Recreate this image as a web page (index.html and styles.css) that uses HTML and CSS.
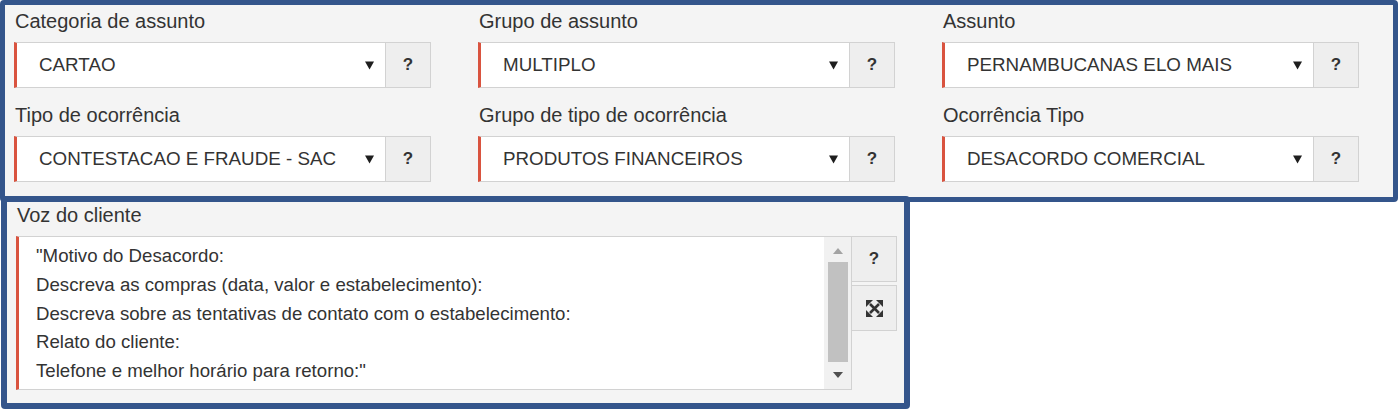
FILE: index.html
```html
<!DOCTYPE html>
<html lang="pt-BR">
<head>
<meta charset="utf-8">
<title>Ocorrência</title>
<link rel="stylesheet" href="styles.css">
</head>
<body>
<div class="panel panel-top">
  <div class="grid">
    <div class="field">
      <div class="lbl">Categoria de assunto</div>
      <div class="ctrl">
        <div class="select"><span class="val">CARTAO</span><svg class="caret" viewBox="0 0 10 9"><polygon points="0,0 10,0 5,9"/></svg></div>
        <div class="help">?</div>
      </div>
    </div>
    <div class="field">
      <div class="lbl">Grupo de assunto</div>
      <div class="ctrl">
        <div class="select"><span class="val">MULTIPLO</span><svg class="caret" viewBox="0 0 10 9"><polygon points="0,0 10,0 5,9"/></svg></div>
        <div class="help">?</div>
      </div>
    </div>
    <div class="field">
      <div class="lbl">Assunto</div>
      <div class="ctrl">
        <div class="select"><span class="val">PERNAMBUCANAS ELO MAIS</span><svg class="caret" viewBox="0 0 10 9"><polygon points="0,0 10,0 5,9"/></svg></div>
        <div class="help">?</div>
      </div>
    </div>
    <div class="field">
      <div class="lbl">Tipo de ocorrência</div>
      <div class="ctrl">
        <div class="select"><span class="val">CONTESTACAO E FRAUDE - SAC</span><svg class="caret" viewBox="0 0 10 9"><polygon points="0,0 10,0 5,9"/></svg></div>
        <div class="help">?</div>
      </div>
    </div>
    <div class="field">
      <div class="lbl">Grupo de tipo de ocorrência</div>
      <div class="ctrl">
        <div class="select"><span class="val">PRODUTOS FINANCEIROS</span><svg class="caret" viewBox="0 0 10 9"><polygon points="0,0 10,0 5,9"/></svg></div>
        <div class="help">?</div>
      </div>
    </div>
    <div class="field">
      <div class="lbl">Ocorrência Tipo</div>
      <div class="ctrl">
        <div class="select"><span class="val">DESACORDO COMERCIAL</span><svg class="caret" viewBox="0 0 10 9"><polygon points="0,0 10,0 5,9"/></svg></div>
        <div class="help">?</div>
      </div>
    </div>
  </div>
</div>
<div class="panel panel-bottom">
  <div class="lbl lbl-voz">Voz do cliente</div>
  <div class="ta-row">
    <div class="textarea">
      <div class="ta-text">
        <div>"Motivo do Desacordo:</div>
        <div>Descreva as compras (data, valor e estabelecimento):</div>
        <div>Descreva sobre as tentativas de contato com o estabelecimento:</div>
        <div>Relato do cliente:</div>
        <div>Telefone e melhor horário para retorno:"</div>
      </div>
      <div class="scrollbar">
        <svg class="sb-arrow sb-up" viewBox="0 0 10 6"><polygon points="0,6 10,6 5,0"/></svg>
        <div class="sb-track"><div class="sb-thumb"></div></div>
        <svg class="sb-arrow sb-down" viewBox="0 0 10 6"><polygon points="0,0 10,0 5,6"/></svg>
      </div>
    </div>
    <div class="ta-btns">
      <div class="help">?</div>
      <div class="help">
        <svg class="expand" viewBox="0 0 17 17">
          <path d="M4 4 L13 13 M13 4 L4 13" stroke="#333" stroke-width="2.6" fill="none"/>
          <polygon points="0,0 7,0 0,7" fill="#333"/>
          <polygon points="17,0 10,0 17,7" fill="#333"/>
          <polygon points="0,17 7,17 0,10" fill="#333"/>
          <polygon points="17,17 10,17 17,10" fill="#333"/>
        </svg>
      </div>
    </div>
  </div>
</div>
</body>
</html>
```
FILE: styles.css
```css
* { box-sizing: border-box; }
html, body { margin: 0; padding: 0; background: #ffffff; }
body {
  font-family: "Liberation Sans", Arial, sans-serif;
  color: #333333;
}
.panel {
  background: #f4f4f4;
  border: 5px solid #34558b;
  border-radius: 4px;
}
.panel-top {
  width: 1398px;
  height: 202px;
  padding: 4px 0 0 9px;
  position: relative;
}
.grid {
  display: grid;
  grid-template-columns: repeat(3, 417px);
  column-gap: 47px;
  row-gap: 15px;
}
.lbl {
  font-size: 20px;
  line-height: 24px;
  height: 24px;
  color: #333;
  white-space: nowrap;
  padding-left: 1px;
}
.ctrl {
  display: flex;
  margin-top: 9px;
  height: 46px;
}
.select {
  flex: 1;
  display: flex;
  align-items: center;
  background: #ffffff;
  border: 1px solid #d2d2d2;
  border-left: 3px solid #d9533f;
  padding: 0 11px 0 22px;
}
.val {
  flex: 1;
  font-size: 18.8px;
  color: #333;
  white-space: nowrap;
}
.caret {
  width: 9px;
  height: 9px;
  fill: #1e1e1e;
}
.help {
  width: 45px;
  height: 46px;
  flex: none;
  display: flex;
  align-items: center;
  justify-content: center;
  background: #eeeeee;
  border: 1px solid #d2d2d2;
  border-left: none;
  font-weight: bold;
  font-size: 17px;
  color: #333;
}
.panel-bottom {
  width: 909px;
  height: 213px;
  margin-top: -6px;
  margin-left: 1px;
  border-width: 6px;
  padding: 1px 7px 13px 9px;
  position: relative;
}
.lbl-voz { padding-left: 1px; }
.ta-row {
  display: flex;
  margin-top: 9px;
}
.textarea {
  width: 836px;
  height: 154px;
  display: flex;
  background: #ffffff;
  border: 1px solid #d2d2d2;
  border-left: 3px solid #d9533f;
}
.ta-text {
  flex: 1;
  padding: 5px 0 0 17px;
  font-size: 18.65px;
  line-height: 28.75px;
  color: #333;
  white-space: nowrap;
  overflow: hidden;
}
.scrollbar {
  width: 27px;
  height: 100%;
  background: #f1f1f1;
  display: flex;
  flex-direction: column;
  align-items: center;
}
.sb-arrow {
  width: 10px;
  height: 6px;
  flex: none;
}
.sb-up { fill: #a3a3a3; margin-top: 11px; }
.sb-down { fill: #505050; margin-bottom: 11px; }
.sb-track {
  flex: 1;
  width: 100%;
  display: flex;
  justify-content: center;
  padding: 8px 0 10px;
}
.sb-thumb {
  width: 20px;
  height: 100%;
  background: #c1c1c1;
}
.ta-btns {
  display: flex;
  flex-direction: column;
  gap: 3px;
}
.ta-btns .help {
  border: 1px solid #d2d2d2;
  border-left: none;
}
.expand {
  width: 17px;
  height: 17px;
}
```
